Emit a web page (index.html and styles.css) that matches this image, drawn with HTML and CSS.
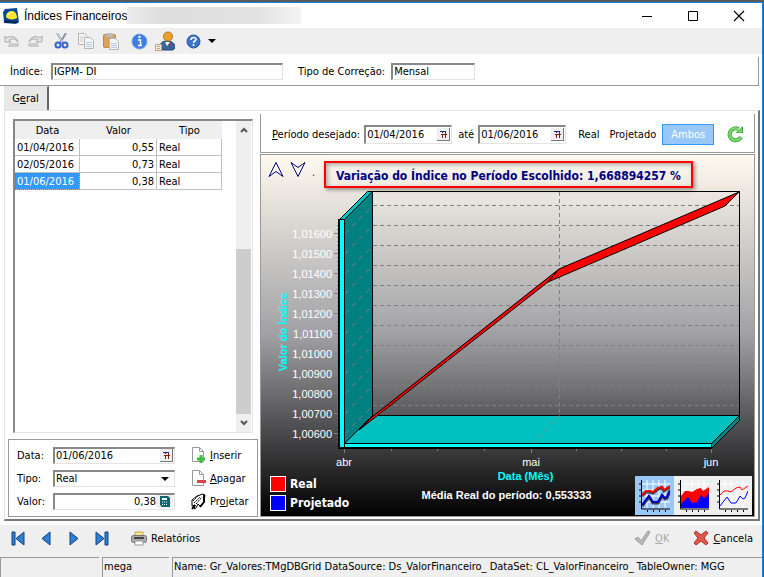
FILE: index.html
```html
<!DOCTYPE html>
<html lang="pt-BR">
<head>
    <meta charset="UTF-8">
    <meta name="viewport" content="width=device-width, initial-scale=1.0">
    <title>Índices Financeiros</title>
    <link rel="stylesheet" href="styles.css">
</head>
<body>
    <div class="window">
        <header class="titlebar">
            <svg class="logo" width="16" height="16" viewBox="0 0 16 16"><path d="M2 1 14 0 16 14 13 16 1 15 0 4z" fill="#0b4a9b"/><path d="M1 12 15 13 15 15 2 15z" fill="#062a5c"/><path d="M3 9C3 5 6 3 9 3s5 3 5 7c-3 2-9 2-11-1z" fill="#ffe62e"/><path d="M5 7c1-2 3-3 5-2" stroke="#fffbb0" fill="none"/></svg>
            <h1>Índices Financeiros</h1>
            <span class="masked"></span>
            <div class="win-buttons">
                <button type="button" aria-label="Minimizar"><svg width="12" height="12"><path d="M1 6.500h10" stroke="#000"/></svg></button>
                <button type="button" aria-label="Maximizar"><svg width="12" height="12"><path d="M1.500 1.500h9v9h-9z" stroke="#000" fill="none"/></svg></button>
                <button type="button" aria-label="Fechar"><svg width="12" height="12"><path d="M1 1l10 10M11 1 1 11" stroke="#000" stroke-width="1.200"/></svg></button>
            </div>
        </header>

        <div class="toolbar">
            <button type="button" aria-label="Desfazer"><svg width="16" height="16" viewBox="0 0 16 16"><path d="M1 3v6h6L5 7c3-2 7-1 9 2-1-5-7-7-11-4z" fill="#e6e6e6" stroke="#aaa"/><path d="M4 13h10v-3M5 11h8" stroke="#aaa" fill="none"/></svg></button>
            <button type="button" class="gap-wide" aria-label="Refazer"><svg width="16" height="16" viewBox="0 0 16 16"><path d="M15 3v6H9l2-2c-3-2-7-1-9 2 1-5 7-7 11-4z" fill="#e6e6e6" stroke="#aaa"/><path d="M12 13H2v-3M11 11H3" stroke="#aaa" fill="none"/></svg></button>
            <button type="button" aria-label="Recortar"><svg width="16" height="16" viewBox="0 0 16 16"><path d="M3 0l6 10M12 0 6 10" stroke="#8794a3" stroke-width="2"/><path d="M3 0l6 10" stroke="#dce3ea"/><g fill="none" stroke="#3564cf" stroke-width="2"><circle cx="4" cy="12" r="2.500"/><circle cx="11" cy="12" r="2.500"/></g></svg></button>
            <button type="button" aria-label="Copiar"><svg width="18" height="16" viewBox="0 0 18 16"><g fill="#f4f4f4" stroke="#b5b5b5"><path d="M1.500.500h6l3 3v8h-9z"/><path d="M7.500 4.500h6l3 3v8h-9z"/></g><path d="M3 4h5M3 6h3M3 8h3" stroke="#ccc"/><path d="M9 9.500h6M9 11.500h6M9 13.500h6" stroke="#b9c8e6"/></svg></button>
            <button type="button" class="gap-wide" aria-label="Colar"><svg width="18" height="17" viewBox="0 0 18 17"><rect x="1.500" y="1.500" width="12" height="13" rx="1" fill="#d9a15c" stroke="#bf8742"/><rect x="4" y="0" width="7" height="4" rx="1" fill="#bbb"/><path d="M7.500 5.500h6l3 3v8h-9z" fill="#f4f4f4" stroke="#b5b5b5"/><path d="M9 10.500h6M9 12.500h6M9 14.500h6" stroke="#b9c8e6"/></svg></button>
            <button type="button" aria-label="Informações"><svg width="17" height="17" viewBox="0 0 17 17"><circle cx="8.500" cy="8.500" r="7.500" fill="#3f7ee0" stroke="#7aa6ec"/><path d="M7 7h2.500v5M7 12.500h4" stroke="#fff" stroke-width="1.500" fill="none"/><circle cx="8.500" cy="4" r="1.200" fill="#fff"/></svg></button>
            <button type="button" class="gap-wide" aria-label="Usuário"><svg width="20" height="20" viewBox="0 0 20 20"><path d="M5 17c0-5 2-7 7-7s8 2 8 7l-2 2H7z" fill="#34679d" stroke="#1f4876"/><circle cx="13" cy="5.500" r="4.500" fill="#eda12d" stroke="#b8741a"/><path d="M10 11l2 4 3-4z" fill="#fff"/><path d="M15 11l1 3-2 3z" fill="#d22"/><path d="M.500 13.500h6v6h-6z" fill="#f7ecd8" stroke="#b7a58c"/><path d="M2 15.500h3M2 17.500h3" stroke="#b7a58c"/></svg></button>
            <button type="button" aria-label="Ajuda"><svg width="15" height="15" viewBox="0 0 15 15"><circle cx="7.500" cy="7.500" r="6.500" fill="#3d74c9" stroke="#2a56a0"/><path d="M5 6c0-3.500 5-3 5-.500C10 7 7.500 7 7.500 9M7.500 10v2" stroke="#fff" stroke-width="1.600" fill="none"/></svg></button>
            <button type="button" aria-label="Mais"><svg width="8" height="4"><path d="M0 0h8L4 4z"/></svg></button>
        </div>

        <div class="filter">
            <label for="indice">Índice:</label>
            <input id="indice" class="field field-index" value="IGPM- DI">
            <label for="correcao">Tipo de Correção:</label>
            <input id="correcao" class="field field-type" value="Mensal">
        </div>

        <div class="tabs"><button type="button" class="tab">G<u>e</u>ral</button></div>

        <main class="page">
            <section class="side">
                <div class="grid-box">
                    <div class="grid-area">
                        <table class="grid">
                            <thead><tr><th class="c-date">Data</th><th class="c-value">Valor</th><th class="c-kind">Tipo</th></tr></thead>
                            <tbody>
                                <tr><td>01/04/2016</td><td class="num">0,55</td><td>Real</td></tr>
                                <tr><td>02/05/2016</td><td class="num">0,73</td><td>Real</td></tr>
                                <tr><td class="selected">01/06/2016</td><td class="num">0,38</td><td>Real</td></tr>
                            </tbody>
                        </table>
                    </div>
                    <div class="scroll">
                        <button type="button" aria-label="Subir"><svg width="8" height="6"><path d="M1 5l3-3 3 3" stroke="#555" stroke-width="2" fill="none"/></svg></button>
                        <span class="thumb"></span>
                        <button type="button" aria-label="Descer"><svg width="8" height="6"><path d="M1 1l3 3 3-3" stroke="#555" stroke-width="2" fill="none"/></svg></button>
                    </div>
                </div>

                <form class="editor">
                    <label for="data">Data:</label>
                    <div class="field">
                        <input id="data" value="01/06/2016">
                        <button type="button" class="cal" aria-label="Calendário"><svg width="7" height="7"><path d="M0 .500h6M2.500 0v2" stroke="#26267c"/><path d="M1 3.500h6M2.500 3v4M5.500 1v6" stroke="#8c1515"/></svg></button>
                    </div>
                    <button type="button" class="action"><svg width="15" height="16" viewBox="0 0 15 16"><path d="M1.500.500h7l4 4v10h-11zM8.500.500v4h4" fill="#fff" stroke="#999"/><path d="M10 8v8M6 12h8" stroke="#3fbe3f" stroke-width="3"/></svg><span><u>I</u>nserir</span></button>

                    <label for="tipo">Tipo:</label>
                    <div class="field">
                        <select id="tipo"><option>Real</option><option>Projetado</option></select>
                        <svg class="drop" width="8" height="4"><path d="M0 0h8L4 4z"/></svg>
                    </div>
                    <button type="button" class="action"><svg width="15" height="16" viewBox="0 0 15 16"><path d="M1.500.500h7l4 4v11h-11zM8.500.500v4h4" fill="#fff" stroke="#999"/><path d="M6 11.500h9" stroke="#d94545" stroke-width="3"/></svg><span><u>A</u>pagar</span></button>

                    <label for="valor">Valor:</label>
                    <div class="field">
                        <input id="valor" class="right" value="0,38">
                        <button type="button" class="calc" aria-label="Calculadora"><svg width="10" height="11"><path d="M0 0h8l2 2v9H2L0 9z" fill="#00686e"/><path d="M2 2h5v2H2z" fill="#fff"/><path d="M2 6h6M2 8.500h6" stroke="#fff" stroke-dasharray="1 1"/></svg></button>
                    </div>
                    <button type="button" class="action"><svg width="15" height="17" viewBox="0 0 15 17"><path d="M1 7l5-4 6-2 2 1-1 7-4 4-2-2-2 4-2 1 1-4-3 1z" fill="#fff" stroke="#000"/><path d="M2 8l5-5M3 10l6-6M5 11l6-7" stroke="#000" stroke-dasharray="2 1"/><path d="M13 2v7l-4 5M1 16l3-4" stroke="#000" stroke-width="2" fill="none"/></svg><span>Pr<u>o</u>jetar</span></button>
                </form>
            </section>

            <section class="main">
                <div class="period">
                    <label for="de"><u>P</u>eríodo desejado:</label>
                    <div class="field">
                        <input id="de" value="01/04/2016">
                        <button type="button" class="cal" aria-label="Calendário"><svg width="7" height="7"><path d="M0 .500h6M2.500 0v2" stroke="#26267c"/><path d="M1 3.500h6M2.500 3v4M5.500 1v6" stroke="#8c1515"/></svg></button>
                    </div>
                    <label for="ate">até</label>
                    <div class="field">
                        <input id="ate" value="01/06/2016">
                        <button type="button" class="cal" aria-label="Calendário"><svg width="7" height="7"><path d="M0 .500h6M2.500 0v2" stroke="#26267c"/><path d="M1 3.500h6M2.500 3v4M5.500 1v6" stroke="#8c1515"/></svg></button>
                    </div>
                    <div class="modes">
                        <button type="button">Real</button>
                        <button type="button">Projetado</button>
                        <button type="button" class="on">Ambos</button>
                    </div>
                    <button type="button" class="refresh" aria-label="Atualizar"><svg width="18" height="18" viewBox="0 0 18 18"><path d="M12.500 4A6 6 0 1 0 15 12" fill="none" stroke="#3f9f3c" stroke-width="4"/><path d="M17 1v7H9.500z" fill="#3f9f3c"/><path d="M12.500 4A6 6 0 1 0 15 12" fill="none" stroke="#78d86b" stroke-width="2.500"/><path d="M16 3v4.500h-5z" fill="#78d86b"/></svg></button>
                </div>

                <div class="chart">
                    <div class="chart-head">
                        <button type="button" aria-label="Mais 3D"><svg width="16" height="17"><path d="M8 1.500 15 15.500 8 10.500 1 15.500z" fill="none" stroke="#000080"/></svg></button>
                        <button type="button" aria-label="Menos 3D"><svg width="16" height="17"><path d="M1 1.500 8 6.500 15 1.500 8 15.500z" fill="none" stroke="#000080"/></svg></button>
                        <span class="dot">.</span>
                        <h2>Variação do Índice no Período Escolhido: 1,668894257 %</h2>
                    </div>

                    <svg class="plot" viewBox="262 190 491 281" id="plot">
                        <rect x="372" y="191" width="368" height="1"/>
                        <rect x="739" y="191" width="1" height="225"/>
                        <g id="back-grid" stroke="#808080" stroke-dasharray="4 3"></g>
                        <polygon points="344.500,219.500 372.500,191.500 372.500,415.500 344.500,443.500" fill="#008080" stroke="#000"/>
                        <polygon points="339.500,219.500 367.500,191.500 372.500,191.500 344.500,219.500" fill="#00c0c0" stroke="#000"/>
                        <g id="wall-grid" stroke="#808080" stroke-dasharray="5 5"></g>
                        <polygon points="344.500,443.500 372.500,415.500 739.500,415.500 711.500,443.500" fill="#00c0c0" stroke="#000"/>
                        <polygon points="711.500,443.500 739.500,415.500 739.500,420.500 711.500,448.500" fill="#008080" stroke="#000"/>
                        <path d="M531.500 443.500l28-28" stroke="#808080" stroke-dasharray="4 5"/>
                        <rect x="339" y="219" width="6" height="229" fill="#00ffff"/>
                        <rect x="344" y="443" width="368" height="5" fill="#00ffff"/>
                        <path d="M339 219.500h6M344.500 219v229M344 443.500h368M711.500 443v5" stroke="#000" fill="none"/>
                        <path d="M339 219v229M338 448h374" stroke="#000" stroke-width="2"/>
                        <polygon points="359,430 372,417 559,269 548,282" fill="#f00" stroke="#000"/>
                        <polygon points="548,282 559,269 739,192 725,206" fill="#f00" stroke="#000"/>
                        <g id="ticks" stroke="#808080"></g>
                        <g id="y-labels" class="axis-label" text-anchor="end"></g>
                        <g class="axis-label" text-anchor="middle">
                            <text x="344" y="466">abr</text>
                            <text x="531" y="466">mai</text>
                            <text x="711" y="466">jun</text>
                        </g>
                        <text class="axis-title" text-anchor="middle" transform="translate(287 332) rotate(-90)">Valor do Índice</text>
                    </svg>

                    <div class="chart-foot">
                        <ul class="legend">
                            <li><span class="swatch red"></span>Real</li>
                            <li><span class="swatch blue"></span>Projetado</li>
                        </ul>
                        <div class="captions">
                            <p class="x-title">Data (Mês)</p>
                            <p>Média Real do período: 0,553333</p>
                        </div>
                        <div class="styles">
                            <button type="button" class="on" aria-label="Fitas"><svg width="31" height="33" viewBox="0 0 31 33"><path d="M8 1v28M14 1v28M20 1v28M26 1v28M3 5h28M3 11h28M3 17h28M3 23h28" stroke="#fff"/><path d="M3 17l4-4h4l3 1 5-4 4-1 2 3 6-4" stroke="#404040" stroke-width="3" fill="none"/><path d="M3 16l4-4h4l3 1 5-4 4-1 2 3 6-4" stroke="#f00" stroke-width="2" fill="none"/><path d="M3 27l7-9 4 6h5l4-7 3 3 2-1 3-7" stroke="#404040" stroke-width="3" fill="none"/><path d="M3 26l7-9 4 6h5l4-7 3 3 2-1 3-7" stroke="#00c" stroke-width="2" fill="none"/><path d="M2.500 1v29H31M0 5h2M0 11h2M0 17h2M0 23h2M8.500 31v2M14.500 31v2M20.500 31v2M26.500 31v2" stroke="#000" fill="none"/></svg></button>
                            <button type="button" aria-label="Área"><svg width="31" height="33" viewBox="0 0 31 33"><path d="M8 1v28M14 1v28M20 1v28M26 1v28M3 5h28M3 11h28" stroke="#fff"/><path d="M3 29V17l4-5h4l3 1 5-3 4-1 2 3 6-4v21z" fill="#f00"/><path d="M3 29v-4l7-7 4 6 5-1 4-7 3 3 2-1 3-4v15z" fill="#00f"/><path d="M2.500 1v29H31M0 5h2M0 11h2M0 17h2M0 23h2M8.500 31v2M14.500 31v2M20.500 31v2M26.500 31v2" stroke="#000" fill="none"/></svg></button>
                            <button type="button" aria-label="Linhas"><svg width="31" height="33" viewBox="0 0 31 33"><path d="M8 1v28M14 1v28M20 1v28M26 1v28M3 5h28M3 11h28M3 17h28M3 23h28" stroke="#fff"/><path d="M3 16l4-4h4l3 1 5-4 4-1 2 3 6-4" stroke="#f00" fill="none"/><path d="M3 27l7-9 4 6h5l4-7 3 3 2-1 3-7" stroke="#00f" fill="none"/><path d="M2.500 1v29H31M0 5h2M0 11h2M0 17h2M0 23h2M8.500 31v2M14.500 31v2M20.500 31v2M26.500 31v2" stroke="#000" fill="none"/></svg></button>
                        </div>
                    </div>
                </div>
            </section>
        </main>

        <footer class="commands">
            <div class="nav">
                <button type="button" aria-label="Primeiro"><svg width="14" height="15"><path d="M1 1h3v13H1zM13 1v13L5 7.500z" fill="#2d82d8" stroke="#123f7c"/></svg></button>
                <button type="button" aria-label="Anterior"><svg width="14" height="15"><path d="M11 1v13L3 7.500z" fill="#2d82d8" stroke="#123f7c"/></svg></button>
                <button type="button" aria-label="Próximo"><svg width="14" height="15"><path d="M3 1v13l8-6.500z" fill="#2d82d8" stroke="#123f7c"/></svg></button>
                <button type="button" aria-label="Último"><svg width="14" height="15"><path d="M1 1v13l8-6.500zM10 1h3v13h-3z" fill="#2d82d8" stroke="#123f7c"/></svg></button>
            </div>
            <button type="button" class="cmd"><svg width="16" height="15" viewBox="0 0 16 15"><path d="M4 1h8v5H4z" fill="#ffe58a" stroke="#bda95e"/><rect x=".500" y="4.500" width="15" height="7" rx="2" fill="#aaa" stroke="#777"/><path d="M3 7h10" stroke="#444" stroke-width="2"/><path d="M4 10h8v4H4z" fill="#fff" stroke="#999"/></svg><span>Relatórios</span></button>
            <span class="spacer"></span>
            <button type="button" class="cmd" disabled><svg width="17" height="16" viewBox="0 0 17 16"><path d="M1 9l3-2 3 4 7-10 2 1L8 15z" fill="#bbb" stroke="#999"/></svg><span><u>O</u>K</span></button>
            <button type="button" class="cmd"><svg width="16" height="16" viewBox="0 0 16 16"><path d="M3 1l5 4 5-4 2 2-4 5 4 5-2 2-5-4-5 4-2-2 4-5-4-5z" fill="#e2574c" stroke="#a9342b"/></svg><span><u>C</u>ancela</span></button>
        </footer>

        <div class="status">
            <span class="cell blank"></span>
            <span class="cell user">mega</span>
            <span class="cell info">Name: Gr_Valores:TMgDBGrid DataSource: Ds_ValorFinanceiro_ DataSet: CL_ValorFinanceiro_ TableOwner: MGG</span>
        </div>
    </div>
    <script src="chart.js"></script>
</body>
</html>
```

FILE: styles.css
```css
* {
    box-sizing: border-box;
}
body {
    margin: 0;
    background: #5a5a5a;
    font-family: "DejaVu Sans Condensed", "Noto Sans", sans-serif;
    font-size: 11px;
    color: #000;
}
button, input, select {
    font: inherit;
    color: inherit;
    margin: 0;
    padding: 0;
    border: 0;
    background: none;
    border-radius: 0;
    outline: 0;
}
h1, h2, p, ul {
    margin: 0;
    padding: 0;
    font-weight: normal;
}
svg {
    display: block;
    flex: none;
}
.window {
    display: flex;
    flex-direction: column;
    height: calc(100vh - 2px);
    margin: 2px 1px 0 0;
    border-top: 1px solid #1a80d9;
    border-right: 1px solid #1a80d9;
    background: #fff;
    overflow: hidden;
}

/* title bar */
.titlebar {
    display: flex;
    align-items: center;
    height: 25px;
    padding-left: 3px;
}
.titlebar h1 {
    margin-left: 5px;
    font-family: "Liberation Sans", sans-serif;
    font-size: 12px;
    white-space: nowrap;
}
.masked {
    width: 174px;
    height: 17px;
    background: linear-gradient(90deg, #ececec, #dedede 20%, #e2e2e2 75%, #f4f4f4);
}
.win-buttons {
    display: flex;
    margin-left: auto;
}
.win-buttons button {
    display: flex;
    justify-content: center;
    width: 46px;
}

/* icon bar */
.toolbar {
    display: flex;
    align-items: center;
    gap: 7px;
    height: 26px;
    padding: 0 4px;
    background: #efefef;
}
.toolbar .gap-wide {
    margin-right: 4px;
}

/* fields */
.field {
    display: flex;
    align-items: center;
    height: 17px;
    padding: 0 1px 0 1px;
    border: 1px solid #e3e3e3;
    border-top: 2px solid #888;
    border-left: 2px solid #888;
    background: #fff;
}
.field input, .field select {
    flex: 1;
    width: 0;
    min-width: 0;
    height: 100%;
    appearance: none;
}
.field .right {
    text-align: right;
}
.cal, .calc {
    display: flex;
    align-items: center;
    justify-content: center;
    width: 13px;
    height: 13px;
    background: #efefef;
    border-right: 1px solid #777;
    border-bottom: 1px solid #777;
}
.calc {
    width: 17px;
    border: 0;
}
.drop {
    margin: 0 4px;
}
.filter {
    display: flex;
    align-items: center;
    height: 29px;
    margin: 3px 3px 0 0;
    padding-left: 10px;
    border-right: 1px solid #999;
    border-bottom: 1px solid #999;
}
.filter .field-index {
    width: 232px;
    margin: 0 15px 0 8px;
}
.filter .field-type {
    width: 84px;
    margin-left: 6px;
}

/* tabs */
.tabs {
    height: 24px;
    padding-left: 4px;
}
.tab {
    width: 45px;
    height: 24px;
    border-right: 2px solid #666;
    border-top: 1px solid #e3e3e3;
    background: #e8e8e8;
}
.page {
    display: flex;
    flex: 1;
    min-height: 0;
    margin: 0 2px 4px 4px;
    padding: 3px 3px 2px 3px;
    gap: 2px;
    border: 1px solid #e3e3e3;
    border-right: 2px solid #777;
    border-bottom: 2px solid #777;
}
.side {
    display: flex;
    flex-direction: column;
    flex: none;
    width: 250px;
    gap: 6px;
}

/* data grid */
.grid-box {
    display: flex;
    flex: 1;
    min-height: 0;
    margin: 5px 5px 0 5px;
    border: 1px solid #e3e3e3;
    border-top: 2px solid #888;
    border-left: 2px solid #888;
}
.grid-area {
    flex: 1;
}
.grid {
    border-collapse: separate;
    border-spacing: 0;
    table-layout: fixed;
    width: 207px;
}
.grid th {
    height: 18px;
    padding: 0;
    font-weight: normal;
    background: #efefef;
}
.grid td {
    height: 17px;
    padding: 1px 2px 0;
    border-right: 1px solid #c0c0c0;
    border-bottom: 1px solid #c0c0c0;
    line-height: 15px;
    white-space: nowrap;
}
.grid .c-date {
    width: 65px;
}
.grid .c-value {
    width: 77px;
}
.grid .c-kind {
    width: 65px;
}
.grid .num {
    text-align: right;
}
.grid .selected {
    background: #3399ff;
    color: #fff;
    outline: 1px dotted #c60;
    outline-offset: -1px;
}
.scroll {
    display: flex;
    flex-direction: column;
    width: 16px;
    border-right: 1px solid #fff;
    background: #efefef;
}
.scroll button {
    display: flex;
    align-items: center;
    justify-content: center;
    height: 18px;
}
.scroll .thumb {
    flex: 1;
    margin-top: 110px;
    background: #cdcdcd;
}

/* editor */
.editor {
    display: grid;
    grid-template-columns: 36px 122px 1fr;
    gap: 3px 0;
    align-content: center;
    align-items: center;
    height: 78px;
    padding-left: 8px;
    border: 1px solid #999;
}
.editor .action {
    display: flex;
    align-items: center;
    gap: 4px;
    height: 20px;
    margin-left: 16px;
}

/* period bar */
.main {
    display: flex;
    flex-direction: column;
    flex: 1;
    min-width: 0;
    gap: 1px;
}
.period {
    display: flex;
    align-items: center;
    height: 39px;
    padding: 2px 10px 0 11px;
    border: 1px solid #999;
    border-top: 0;
}
.period .field {
    width: 88px;
    height: 19px;
    margin-left: 4px;
}
.period .field + label {
    margin-left: 6px;
}
.modes {
    display: flex;
    align-items: center;
    gap: 10px;
    margin-left: 12px;
}
.modes .on {
    width: 52px;
    height: 21px;
    margin-left: -4px;
    border: 1px solid #3399ff;
    background: #99c8f8;
    color: #fff;
}
.refresh {
    margin-left: auto;
}

/* chart */
.chart {
    display: flex;
    flex-direction: column;
    flex: 1;
    min-height: 0;
    border: 1px solid #999;
    background: linear-gradient(#fffaf0, #a0a0a4 50%, #000);
}
.chart-head {
    display: flex;
    align-items: center;
    gap: 6px;
    height: 35px;
    padding-left: 7px;
}
.chart-head button {
    margin-bottom: 6px;
}
.dot {
    width: 6px;
    color: #800000;
}
.chart-head h2 {
    height: 27px;
    margin-top: 4px;
    padding: 0 10px;
    border: 2px solid #f00;
    box-shadow: 2px 2px 4px rgba(0, 0, 0, 0.4), inset 2px 2px 4px rgba(0, 0, 0, 0.3);
    font-size: 12px;
    font-weight: bold;
    line-height: 26px;
    color: #000080;
    white-space: nowrap;
}
.plot {
    flex: 1;
    width: 100%;
    min-height: 0;
}
.axis-label {
    font-family: "Liberation Sans", sans-serif;
    font-size: 11px;
    fill: #fff;
}
.axis-title {
    font-family: "Liberation Sans", sans-serif;
    font-size: 11px;
    font-weight: bold;
    fill: #00ffff;
}
.chart-foot {
    display: flex;
    justify-content: space-between;
    height: 45px;
}
.legend {
    display: flex;
    flex-direction: column;
    gap: 3px;
    width: 117px;
    padding: 5px 0 0 9px;
    list-style: none;
    font-size: 12px;
    font-weight: bold;
    color: #fff;
}
.legend li {
    display: flex;
    align-items: center;
    gap: 4px;
    height: 16px;
}
.swatch {
    width: 16px;
    height: 16px;
    border: 1px solid #fff;
}
.swatch.red {
    background: #f00;
}
.swatch.blue {
    background: #00f;
}
.captions {
    margin-top: -4px;
    font-family: "Liberation Sans", sans-serif;
    font-size: 11px;
    line-height: 19px;
    text-align: center;
    color: #fff;
}
.captions p {
    font-weight: bold;
}
.captions .x-title {
    padding-left: 38px;
    color: #00ffff;
}
.styles {
    display: flex;
    height: 39px;
    margin: 5px 2px 0 0;
    background: #efefef;
}
.styles button {
    display: flex;
    align-items: center;
    justify-content: center;
    width: 39px;
}
.styles .on {
    background: #99c8f8;
}

/* bottom bars */
.commands {
    display: flex;
    align-items: center;
    height: 32px;
    padding: 0 9px 6px 11px;
    background: #efefef;
}
.commands .nav {
    display: flex;
    gap: 14px;
    margin-right: 22px;
}
.cmd {
    display: flex;
    align-items: center;
    gap: 4px;
}
.cmd + .cmd {
    margin-left: 24px;
}
.cmd:disabled {
    color: #aaa;
}
.spacer {
    flex: 1;
}
.status {
    display: flex;
    gap: 3px;
    height: 20px;
    background: #efefef;
    font-size: 11px;
    line-height: 18px;
    white-space: nowrap;
}
.cell {
    padding-left: 1px;
    border-top: 1px solid #999;
    border-left: 1px solid #999;
    overflow: hidden;
}
.cell.blank {
    width: 99px;
}
.cell.user {
    width: 67px;
}
.cell.info {
    flex: 1;
}
```

FILE: chart.js
```javascript
const NS = 'http://www.w3.org/2000/svg';

function line(parent, x1, y1, x2, y2) {
    const el = document.createElementNS(NS, 'path');
    el.setAttribute('d', `M${x1} ${y1}L${x2} ${y2}`);
    document.getElementById(parent).appendChild(el);
}

// value axis, from 1,01600 down to 1,00600
for (let i = 0; i <= 10; i++) {
    const y = 233.5 + i * 20;
    line('back-grid', 373, y - 28, 739, y - 28);
    line('wall-grid', 345, y, 372, y - 27);
    line('ticks', 334, y, 338, y);
    for (let m = -2; m <= 2; m++) {
        line('ticks', 337, y + m * 4, 338, y + m * 4);
    }
    const label = document.createElementNS(NS, 'text');
    label.setAttribute('x', 332);
    label.setAttribute('y', y + 4);
    label.textContent = '1,0' + (1600 - i * 100).toString().padStart(4, '0');
    document.getElementById('y-labels').appendChild(label);
}
line('back-grid', 559.5, 192, 559.5, 415);

// month axis
[344.5, 531.5, 711.5].forEach(x => line('ticks', x, 449, x, 453));
[391.5, 437.5, 484.5, 576.5, 621.5, 666.5].forEach(x => line('ticks', x, 449, x, 451));
```
